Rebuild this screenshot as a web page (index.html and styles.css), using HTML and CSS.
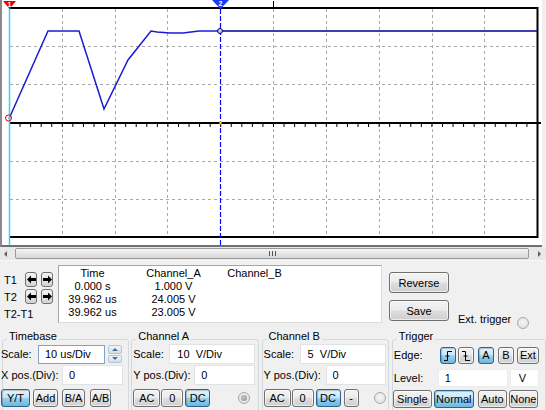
FILE: index.html
```html
<!DOCTYPE html>
<html>
<head>
<meta charset="utf-8">
<title>Oscilloscope</title>
<link rel="stylesheet" href="styles.css">
</head>
<body>
<div class="scope">
  <svg class="plot" width="540" height="245" viewBox="2 0 540 245">
    <g stroke="#a8a8a8" stroke-width="1" stroke-dasharray="3 3" fill="none">
      <path d="M62.5 9V236M115.5 9V236M167.5 9V236M273.5 9V236M326.5 9V236M379.5 9V236M432.5 9V236M484.5 9V236"/>
      <path d="M10 46.5H536M10 84.5H536M10 161.5H536M10 199.5H536"/>
    </g>
    <g stroke="#000" fill="none">
      <path d="M9 8H537.5V237H9" stroke-width="2"/>
      <path d="M9 123H541" stroke-width="2"/>
      <path d="M9 125.5H537" stroke-width="3" stroke-dasharray="1 9.56"/>
      <path d="M273.5 1V8" stroke-width="1"/>
    </g>
    <polyline points="9,118.7 48,31 79,31 104,109 128,60 151,31 157,32 170,33 183,33 199,31 220,31" stroke="#1b1bd4" stroke-width="1.5" fill="none"/>
    <path d="M220 31H537" stroke="#000090" stroke-width="1.5" fill="none"/>
    <path d="M9.5 8V245" stroke="#2ed6f0" stroke-width="1.5"/>
    <path d="M220.5 9V245" stroke="#0000ff" stroke-width="1.2" stroke-dasharray="5 2"/>
    <rect x="219.5" y="121.5" width="2" height="3" fill="#ffe600"/>
    <circle cx="8.5" cy="118" r="3" stroke="#e00000" stroke-width="1" fill="none"/>
    <circle cx="220" cy="31" r="2.5" stroke="#000070" stroke-width="1" fill="#c8c8e0"/>
    <polygon points="3,1 16,1 9.5,9" fill="#ee0000"/>
    <text x="9.5" y="6.5" class="mk">1</text>
    <polygon points="212,0 229,0 220.5,9" fill="#1a3cf0"/>
    <text x="220.5" y="6" class="mk">2</text>
  </svg>
</div>

<div class="hscroll">
  <span class="sarrow left"></span>
  <div class="thumb"><span class="grip"></span></div>
  <span class="sarrow right"></span>
</div>

<div class="info">
  <div class="cursors">
    <div class="crow">
      <span class="clabel">T1</span>
      <button class="abtn"><svg width="9" height="9" viewBox="0 0 9 9"><polygon points="0,4.5 4,0.5 4,3 9,3 9,6 4,6 4,8.5" fill="#000"/></svg></button>
      <button class="abtn"><svg width="9" height="9" viewBox="0 0 9 9"><polygon points="9,4.5 5,0.5 5,3 0,3 0,6 5,6 5,8.5" fill="#000"/></svg></button>
    </div>
    <div class="crow">
      <span class="clabel">T2</span>
      <button class="abtn"><svg width="9" height="9" viewBox="0 0 9 9"><polygon points="0,4.5 4,0.5 4,3 9,3 9,6 4,6 4,8.5" fill="#000"/></svg></button>
      <button class="abtn"><svg width="9" height="9" viewBox="0 0 9 9"><polygon points="9,4.5 5,0.5 5,3 0,3 0,6 5,6 5,8.5" fill="#000"/></svg></button>
    </div>
    <div class="crow diff">T2-T1</div>
  </div>

  <div class="readout">
    <span>Time</span><span>Channel_A</span><span>Channel_B</span>
    <span>0.000 s</span><span>1.000 V</span><span></span>
    <span>39.962 us</span><span>24.005 V</span><span></span>
    <span>39.962 us</span><span>23.005 V</span><span></span>
  </div>

  <div class="actions">
    <button class="btn big">Reverse</button>
    <div class="saverow">
      <button class="btn big">Save</button>
      <span class="ext">Ext. trigger</span>
      <span class="radio ext-radio"></span>
    </div>
  </div>
</div>

<div class="groups">
  <fieldset class="grp tb">
    <legend>Timebase</legend>
    <div class="row r1">
      <label class="lbl l-scale">Scale:</label>
      <input class="field tb-scale focus" value="10 us/Div" readonly>
      <div class="spin"><span class="up"></span><span class="down"></span></div>
    </div>
    <div class="row r2">
      <label class="lbl l-xpos">X pos.(Div):</label>
      <input class="field tb-pos" value="0" readonly>
    </div>
    <div class="row r3">
      <button class="btn on b-yt">Y/T</button>
      <button class="btn b-add">Add</button>
      <button class="btn b-ba">B/A</button>
      <button class="btn b-ab">A/B</button>
    </div>
  </fieldset>

  <fieldset class="grp ch cha">
    <legend>Channel A</legend>
    <div class="row r1">
      <label class="lbl l-scale">Scale:</label>
      <input class="field ch-scale" value="10  V/Div" readonly>
    </div>
    <div class="row r2">
      <label class="lbl l-ypos">Y pos.(Div):</label>
      <input class="field ch-pos" value="0" readonly>
    </div>
    <div class="row r3">
      <button class="btn b-ac">AC</button>
      <button class="btn b-zero">0</button>
      <button class="btn on b-dc">DC</button>
      <span class="radio checked ch-radio"></span>
    </div>
  </fieldset>

  <fieldset class="grp ch chb">
    <legend>Channel B</legend>
    <div class="row r1">
      <label class="lbl l-scale">Scale:</label>
      <input class="field ch-scale" value="5  V/Div" readonly>
    </div>
    <div class="row r2">
      <label class="lbl l-ypos2">Y pos.(Div):</label>
      <input class="field chb-pos" value="0" readonly>
    </div>
    <div class="row r3">
      <button class="btn b-ac">AC</button>
      <button class="btn b-zero">0</button>
      <button class="btn on b-dc">DC</button>
      <button class="btn b-minus">-</button>
      <span class="radio chb-radio"></span>
    </div>
  </fieldset>

  <fieldset class="grp trig">
    <legend>Trigger</legend>
    <div class="row r1">
      <label class="lbl l-edge">Edge:</label>
      <button class="btn on sq"><svg width="10" height="11" viewBox="0 0 10 11"><path d="M1 10.5H4.5V1.5H9M2.5 6H6.5" stroke="#000" stroke-width="1" fill="none"/></svg></button>
      <button class="btn sq b-fall"><svg width="10" height="11" viewBox="0 0 10 11"><path d="M1 1.5H4.5V10.5H9M2.5 6H6.5" stroke="#000" stroke-width="1" fill="none"/></svg></button>
      <button class="btn on sq b-a">A</button>
      <button class="btn sq b-b">B</button>
      <button class="btn b-ext">Ext</button>
    </div>
    <div class="row r2">
      <label class="lbl l-level">Level:</label>
      <input class="field lvl" value="1" readonly>
      <input class="field unit" value="V" readonly>
    </div>
    <div class="row r3">
      <button class="btn b-single">Single</button>
      <button class="btn on b-normal">Normal</button>
      <button class="btn b-auto">Auto</button>
      <button class="btn b-none">None</button>
    </div>
  </fieldset>
</div>
</body>
</html>
```

FILE: styles.css
```css
* { box-sizing: border-box; }
html, body { margin: 0; padding: 0; }
body {
  width: 546px;
  height: 410px;
  overflow: hidden;
  background: #f0f0f0;
  font-family: "Liberation Sans", Arial, sans-serif;
  font-size: 11px;
  color: #000;
}

/* ---------- scope ---------- */
.scope {
  width: 542px;
  height: 247px;
  background: #fff;
  border-left: 2px solid #8a8a8a;
  border-bottom: 2px solid #6f6f6f;
}
.plot { display: block; }
.mk {
  font-family: "Liberation Sans", Arial, sans-serif;
  font-size: 7px;
  font-weight: bold;
  fill: #fff;
  text-anchor: middle;
}

/* ---------- scrollbar ---------- */
.hscroll {
  height: 14px;
  display: flex;
  align-items: center;
  background: #e8e8e8;
  border-bottom: 1px solid #f7f7f7;
}
.sarrow {
  width: 0;
  height: 0;
  border-top: 3px solid transparent;
  border-bottom: 3px solid transparent;
}
.sarrow.left { border-right: 3px solid #606060; margin: 0 8px 0 4px; }
.sarrow.right { border-left: 3px solid #606060; margin: 0 5px 0 9px; }
.thumb {
  flex: 1;
  height: 11px;
  border: 1px solid #9a9a9a;
  border-radius: 2px;
  background: linear-gradient(#f5f5f5, #e6e6e6 50%, #d6d6d6);
  display: flex;
  justify-content: center;
  align-items: center;
}
.grip {
  width: 7px;
  height: 5px;
  background: repeating-linear-gradient(90deg, #555 0 1px, transparent 1px 3px);
}

/* ---------- info row ---------- */
.info {
  display: flex;
  align-items: flex-start;
  height: 69px;
}
.cursors {
  width: 58px;
  padding: 11px 0 0 4px;
}
.crow {
  display: flex;
  align-items: center;
  height: 15px;
  margin-bottom: 2px;
}
.clabel { width: 21px; }
.abtn {
  width: 12px;
  height: 15px;
  padding: 0;
  margin-right: 4px;
  border: 1px solid #707070;
  border-radius: 3px;
  background: linear-gradient(#f4f4f4, #e6e6e6 50%, #d2d2d2);
  display: flex;
  align-items: center;
  justify-content: center;
}
.abtn svg { display: block; }
.crow.diff { margin-top: 3px; height: 13px; }

.readout {
  margin-top: 4px;
  width: 324px;
  height: 58px;
  background: #fff;
  border: 1px solid;
  border-color: #a5a5a5 #dcdcdc #dcdcdc #a5a5a5;
  padding-top: 1px;
  display: grid;
  grid-template-columns: 67px 95px 67px;
  grid-auto-rows: 13px;
  line-height: 13px;
  text-align: center;
  white-space: nowrap;
}

.actions {
  margin-left: 7px;
  padding-top: 11px;
}
.btn {
  font: inherit;
  color: #000;
  height: 18px;
  padding: 0;
  border: 1px solid #707070;
  border-radius: 3px;
  background: linear-gradient(#f3f3f3 0%, #ebebeb 48%, #dddddd 52%, #cfcfcf 100%);
  box-shadow: inset 0 0 0 1px rgba(255, 255, 255, 0.6);
  display: inline-flex;
  align-items: center;
  justify-content: center;
  flex: none;
}
.btn.on {
  border-color: #2c628b;
  background: linear-gradient(#e5f4fc 0%, #c4e5f6 48%, #98d1ef 52%, #6db7df 100%);
  box-shadow: inset 1px 1px 1px rgba(0, 0, 0, 0.2);
}
.btn svg { display: block; }
.btn.big { width: 60px; height: 21px; }
.saverow {
  display: flex;
  align-items: flex-start;
  margin-top: 7px;
}
.ext { margin: 13px 0 0 9px; line-height: 13px; }
.radio {
  width: 12px;
  height: 12px;
  border-radius: 50%;
  border: 1px solid #a9a9a9;
  background: radial-gradient(circle at 50% 40%, #f6f6f6, #dcdcdc);
  flex: none;
  display: flex;
  align-items: center;
  justify-content: center;
}
.radio.checked::after {
  content: "";
  width: 6px;
  height: 6px;
  border-radius: 50%;
  background: radial-gradient(circle at 40% 40%, #c8c8c8, #8a8a8a);
}
.ext-radio { margin: 17px 0 0 6px; }

/* ---------- groups ---------- */
.groups {
  display: flex;
  align-items: flex-start;
}
.grp {
  margin: 0;
  padding: 0;
  height: 95px;
  min-width: 0;
  border: 1px solid #d3d8dd;
  border-radius: 3px;
}
.grp legend {
  padding: 0 2px 6px;
  margin-left: 4px;
  line-height: 13px;
}
.tb { width: 128px; margin-left: 2px; }
.cha { width: 128px; margin-left: 2px; }
.chb { width: 128px; margin-left: 3px; }
.trig { width: 155px; margin-left: 3px; }

.row {
  display: flex;
  align-items: center;
  height: 20px;
}
.row.r1 { margin-top: -5px; }
.row.r2 { margin-top: 1px; }
.row.r3 { margin-top: 3px; height: 19px; }
.tb .row { margin-left: -2px; }
.trig .row.r1 { margin-top: -4px; }
.trig .row.r2 { margin-top: 3px; }
.trig .row.r3 { margin-top: 1px; }

.lbl { padding-left: 1px; white-space: nowrap; flex: none; }
.tb .lbl { padding-left: 0; }
.l-scale { width: 37px; }
.l-xpos { width: 61px; }
.l-ypos { width: 62px; }
.l-ypos2 { width: 63px; }
.l-edge { width: 47px; }
.l-level { width: 45px; }

.field {
  font: inherit;
  color: #000;
  height: 20px;
  padding: 0 0 0 6px;
  margin: 0;
  background: #fff;
  border: 1px solid #dfe3e8;
  border-radius: 0;
  outline: none;
  white-space: pre;
  flex: none;
}
.field.focus { border-color: #7da2ce; height: 19px; }
.tb-scale { width: 67px; }
.tb-pos { width: 61px; }
.ch-scale { width: 86px; padding-left: 7px; }
.ch-pos { width: 61px; }
.chb-pos { width: 60px; }
.lvl { width: 70px; height: 18px; border-color: #ececec; }
.unit { width: 29px; height: 18px; margin-left: 2px; padding-left: 8px; border-color: #ececec; }

.spin {
  width: 14px;
  height: 18px;
  margin-left: 3px;
  display: flex;
  flex-direction: column;
  gap: 1px;
}
.spin span {
  flex: 1;
  border: 1px solid #b6c4d6;
  border-radius: 2px;
  background: linear-gradient(#f1f5fa, #d3deeb);
  display: flex;
  align-items: center;
  justify-content: center;
}
.spin span::after {
  content: "";
  width: 0;
  height: 0;
  border-left: 3px solid transparent;
  border-right: 3px solid transparent;
}
.spin .up::after { border-bottom: 3px solid #4a6a9a; }
.spin .down::after { border-top: 3px solid #4a6a9a; }

/* button sizes */
.b-yt { width: 29px; }
.b-add { width: 25px; margin-left: 3px; }
.b-ba { width: 23px; margin-left: 4px; }
.b-ab { width: 21px; margin-left: 5px; }

.b-ac { width: 27px; margin-left: 1px; }
.b-zero { width: 22px; margin-left: 1px; }
.b-dc { width: 25px; margin-left: 2px; }
.b-minus { width: 15px; margin-left: 3px; }
.ch-radio { margin-left: 28px; }
.chb-radio { margin-left: 15px; }

.sq { width: 16px; height: 17px; }
.b-fall { margin-left: 2px; }
.b-a { margin-left: 4px; }
.b-b { margin-left: 4px; }
.b-ext { width: 22px; height: 17px; margin-left: 3px; }

.b-single { width: 39px; }
.b-normal { width: 40px; margin-left: 2px; }
.b-auto { width: 29px; margin-left: 4px; }
.b-none { width: 29px; margin-left: 2px; }
```
